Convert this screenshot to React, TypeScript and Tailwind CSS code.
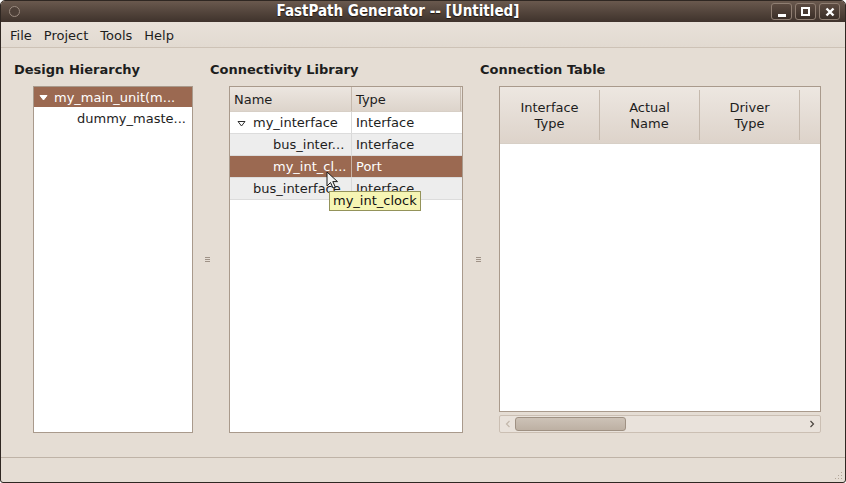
import React from 'react';

const font = { fontFamily: '"DejaVu Sans", "Liberation Sans", sans-serif' };

function Expander({ open = true, filled = false }: { open?: boolean; filled?: boolean }) {
  return (
    <svg width="9" height="9" viewBox="0 0 9 9" className="shrink-0">
      {open && (
        <path
          d="M1 2.5 L8 2.5 L4.5 7 Z"
          fill={filled ? '#ffffff' : 'none'}
          stroke={filled ? '#ffffff' : '#2e2e2e'}
          strokeWidth="1"
          strokeLinejoin="round"
        />
      )}
    </svg>
  );
}

function Handle({ pad }: { pad: string }) {
  return (
    <div className={`flex flex-col justify-center ${pad}`}>
      <div className="flex flex-col gap-[1px]">
        <div className="w-[5px] h-[1px] bg-[#9f9287]" />
        <div className="w-[5px] h-[1px] bg-[#9f9287]" />
        <div className="w-[5px] h-[1px] bg-[#9f9287]" />
      </div>
    </div>
  );
}

function TitleButton({ children }: { children: React.ReactNode }) {
  return (
    <div className="w-[21px] h-[17px] rounded-[3px] border border-[#8f7e72] bg-gradient-to-b from-[#5c4b41] to-[#3b2f28] flex items-center justify-center">
      {children}
    </div>
  );
}

export default function App() {
  return (
    <div
      className="w-[846px] h-[483px] bg-[#e5ddd4] flex flex-col border border-[#2f2722] rounded-t-[5px] rounded-b-[3px] overflow-hidden text-[13px] text-[#1d1d1d]"
      style={font}
    >
      {/* Title bar */}
      <div className="h-[21px] shrink-0 bg-gradient-to-b from-[#6a594e] to-[#3f332c] flex items-center relative">
        <div className="ml-[8px] w-[11px] h-[11px] rounded-full border border-[#9b8b80] bg-[#4e4038]" />
        <div
          className="absolute left-0 right-[50px] top-0 h-[21px] flex items-center justify-center text-white font-bold text-[15px] [text-shadow:0_1px_1px_#1e1612]"
          style={{ fontFamily: '"DejaVu Sans Condensed", "DejaVu Sans", sans-serif' }}
        >
          FastPath Generator -- [Untitled]
        </div>
        <div className="ml-auto mr-[5px] flex gap-[3px] relative">
          <TitleButton>
            <div className="w-[8px] h-[3px] bg-white mt-[7px]" />
          </TitleButton>
          <TitleButton>
            <div className="w-[9px] h-[9px] border-2 border-white" />
          </TitleButton>
          <TitleButton>
            <svg width="10" height="10" viewBox="0 0 10 10">
              <path d="M1.5 1.5 L8.5 8.5 M8.5 1.5 L1.5 8.5" stroke="#fff" strokeWidth="2.4" />
            </svg>
          </TitleButton>
        </div>
      </div>

      {/* Menu bar */}
      <div className="h-[26px] shrink-0 flex items-center gap-[12px] pl-[9px] pt-[2px] bg-gradient-to-b from-[#e8e1d9] to-[#e2dad1] border-b border-[#cdc2b6]">
        <span>File</span>
        <span>Project</span>
        <span>Tools</span>
        <span>Help</span>
      </div>

      {/* Content */}
      <div className="flex-1 flex pl-[13px] pt-[13px]">
        {/* Design Hierarchy */}
        <div className="w-[179px] flex flex-col">
          <div className="font-bold h-[17px] leading-[17px]">Design Hierarchy</div>
          <div className="ml-[19px] mt-[8px] h-[347px] bg-white border border-[#a99a8c]">
            <div className="h-[20px] bg-[#9b6951] text-white flex items-center pl-[5px] pt-[1px] gap-[6px]">
              <Expander filled />
              <span className="whitespace-nowrap">my_main_unit(m...</span>
            </div>
            <div className="h-[22px] flex items-center pl-[43px] pt-[1px]">dummy_maste...</div>
          </div>
        </div>

        <div className="w-[17px] flex">
          <Handle pad="pl-[12px]" />
        </div>

        {/* Connectivity Library */}
        <div className="w-[253px] flex flex-col">
          <div className="font-bold h-[17px] leading-[17px]">Connectivity Library</div>
          <div className="ml-[19px] mt-[8px] h-[347px] bg-white border border-[#a99a8c] relative">
            <div className="h-[25px] flex bg-gradient-to-b from-[#ece6e0] to-[#ddd4cb] border-b border-[#d7cfc6]">
              <div className="w-[122px] pl-[4px] pt-[1px] flex items-center border-r border-[#c5b9ad]">Name</div>
              <div className="w-[109px] pl-[4px] pt-[1px] flex items-center border-r border-[#c5b9ad]">Type</div>
            </div>
            {[
              { name: 'my_interface', type: 'Interface', indent: 'pl-[7px]', exp: true, bg: 'bg-white' },
              { name: 'bus_inter...', type: 'Interface', indent: 'pl-[43px]', bg: 'bg-[#ededed]' },
              { name: 'my_int_cl...', type: 'Port', indent: 'pl-[43px]', bg: 'bg-[#9b6951] text-white', sel: true },
              { name: 'bus_interface', type: 'Interface', indent: 'pl-[23px]', bg: 'bg-[#ededed]' },
            ].map((r, i) => (
              <div key={i} className={`h-[22px] flex border-b border-[#dcdcdc] ${r.bg}`}>
                <div className={`w-[122px] flex items-center gap-[7px] pt-[1px] overflow-hidden whitespace-nowrap border-r ${r.sel ? 'border-[#c9b3a6]' : 'border-[#d9d9d9]'} ${r.indent}`}>
                  {r.exp && <Expander />}
                  <span>{r.name}</span>
                </div>
                <div className="w-[109px] pl-[4px] pt-[1px] flex items-center">{r.type}</div>
              </div>
            ))}

            {/* cursor */}
            <svg width="13" height="19" viewBox="0 0 13 19" className="absolute left-[96px] top-[84px]">
              <path d="M1 1 L1 15 L4.5 11.5 L7 17 L9.3 16 L6.8 10.6 L11.5 10.6 Z" fill="#f2f2f2" stroke="#1a1a1a" strokeWidth="1" strokeLinejoin="round" />
            </svg>
            {/* tooltip */}
            <div className="absolute left-[99px] top-[104px] h-[20px] px-[3px] flex items-center bg-[#f6f5b4] border border-[#94935a] text-[#111] whitespace-nowrap">
              my_int_clock
            </div>
          </div>
        </div>

        <div className="w-[17px] flex">
          <Handle pad="pl-[13px]" />
        </div>

        {/* Connection Table */}
        <div className="w-[341px] flex flex-col">
          <div className="font-bold h-[17px] leading-[17px]">Connection Table</div>
          <div className="ml-[19px] mt-[8px] h-[326px] bg-white border border-[#a99a8c]">
            <div className="h-[57px] flex bg-gradient-to-b from-[#ede7e1] to-[#ddd3ca] border-b border-[#d7cfc6]">
              {[['Interface', 'Type'], ['Actual', 'Name'], ['Driver', 'Type']].map((h, i) => (
                <div key={i} className="w-[100px] flex flex-col items-center justify-center pt-[1px] leading-[16px] border-r border-[#c5b9ad] my-[3px]">
                  <span>{h[0]}</span>
                  <span>{h[1]}</span>
                </div>
              ))}
              <div className="flex-1 my-[3px]" />
            </div>
          </div>
          {/* scrollbar */}
          <div className="ml-[19px] mt-[3px] h-[18px] rounded-[2px] border border-[#cbbfb3] bg-[#e9e2db] flex items-center relative">
            <svg width="6" height="8" viewBox="0 0 6 8" className="ml-[5px]">
              <path d="M4.5 1 L1.5 4 L4.5 7" stroke="#c3b7ab" strokeWidth="1.2" fill="none" />
            </svg>
            <div className="ml-[4px] w-[111px] h-[14px] rounded-[3px] border border-[#9f9183] bg-gradient-to-b from-[#cdc2b7] to-[#bdb0a3]" />
            <svg width="6" height="8" viewBox="0 0 6 8" className="ml-auto mr-[5px]">
              <path d="M1.5 1 L4.5 4 L1.5 7" stroke="#4b4540" strokeWidth="1.2" fill="none" />
            </svg>
          </div>
        </div>
      </div>

      {/* Status bar */}
      <div className="h-[25px] shrink-0 border-t border-[#bfb3a7] relative">
        <svg width="10" height="10" viewBox="0 0 10 10" className="absolute right-[2px] bottom-[2px]">
          {[
            [8, 2], [8, 5], [5, 5], [8, 8], [5, 8], [2, 8],
          ].map(([x, y], i) => (
            <rect key={i} x={x} y={y} width="1" height="1" fill="#b3a698" />
          ))}
        </svg>
      </div>
    </div>
  );
}
